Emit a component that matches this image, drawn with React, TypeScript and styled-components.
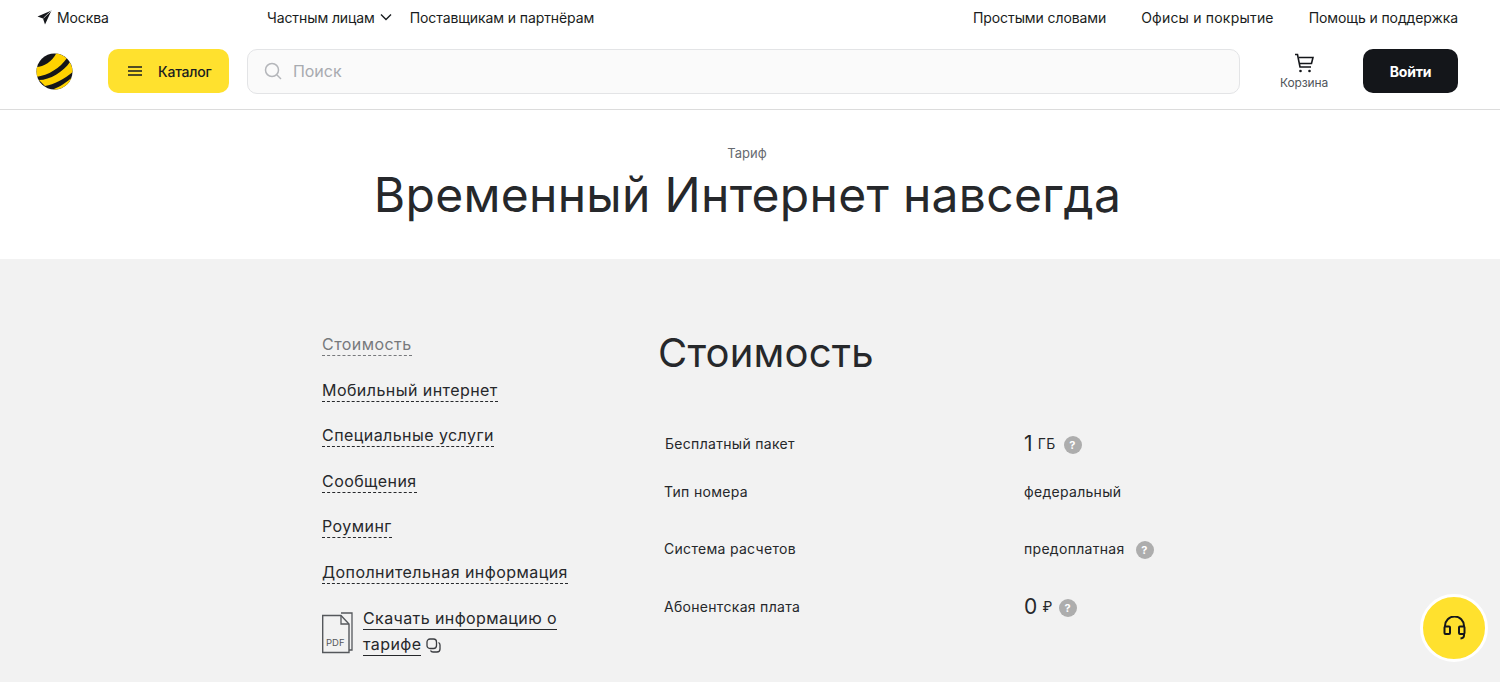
import React from "react";
import styled, { createGlobalStyle } from "styled-components";

const Global = createGlobalStyle`
  html, body { margin: 0; padding: 0; height: 682px; overflow: hidden; background: #fff; }
  body { font-family: Inter, "Noto Sans", "Liberation Sans", sans-serif; color: #191c20; }
  * { box-sizing: border-box; }
`;

const Page = styled.div`
  width: 1500px;
  height: 682px;
  display: flex;
  flex-direction: column;
`;
const TopBar = styled.nav`
  height: 34px;
  padding: 0 42px 0 37px;
  display: flex;
  align-items: center;
  font-size: 14px;
  letter-spacing: -0.1px;
`;
const City = styled.a`
  width: 230px;
  display: flex;
  align-items: center;
  gap: 5px;
`;
const TopLeftLinks = styled.div`
  display: flex;
  align-items: center;
  gap: 18px;
`;
const TopLink = styled.a<{ $wide?: boolean }>`
  display: flex;
  align-items: center;
  gap: 5px;
  white-space: nowrap;
  letter-spacing: ${(p) => (p.$wide ? "0.2px" : "inherit")};
`;
const TopRightLinks = styled.div`
  margin-left: auto;
  display: flex;
  gap: 35px;
`;
const MainBar = styled.header`
  height: 76px;
  padding: 15px 42px 16px 36px;
  border-bottom: 1px solid #dcdcdc;
  display: flex;
  align-items: center;
`;
const LogoWrap = styled.a`
  width: 72px;
  display: flex;
`;
const CatalogButton = styled.button`
  width: 121px;
  height: 44px;
  border: 0;
  border-radius: 10px;
  background: #ffe12e;
  font: 500 14px Inter, sans-serif;
  letter-spacing: -0.2px;
  color: #191c20;
  display: flex;
  align-items: center;
  padding: 0 0 0 20px;
  gap: 16px;
`;
const SearchBox = styled.div`
  width: 994px;
  height: 45px;
  margin-left: 18px;
  border: 1px solid #e3e4e6;
  border-radius: 10px;
  background: #fafafa;
  display: flex;
  align-items: center;
  padding-left: 16px;
  gap: 11px;
  color: #a8abb0;
  font-size: 16px;
`;
const Cart = styled.a`
  width: 123px;
  padding-left: 5px;
  display: flex;
  flex-direction: column;
  align-items: center;
  font-size: 12px;
  letter-spacing: -0.1px;
  color: #50545a;
  gap: 2px;
`;
const LoginButton = styled.button`
  width: 95px;
  height: 44px;
  border: 0;
  border-radius: 10px;
  background: #14161a;
  color: #fff;
  font: 700 14px Inter, sans-serif;
  letter-spacing: -0.2px;
`;
const Hero = styled.section`
  height: 149px;
  display: flex;
  flex-direction: column;
  align-items: center;
  padding-top: 36px;
`;
const Eyebrow = styled.div`
  font-size: 13px;
  line-height: 15px;
  color: #666a70;
  margin-left: -6px;
`;
const Title = styled.h1`
  margin: 5px 0 0 -5px;
  font-size: 48px;
  line-height: 58px;
  font-weight: 400;
  color: #26282b;
  letter-spacing: 0.3px;
`;
const Content = styled.main`
  flex: 1;
  background: #f2f2f2;
  display: flex;
  padding: 72px 0 0 322px;
  overflow: hidden;
`;
const Side = styled.aside`
  width: 336px;
  padding-top: 3px;
  display: flex;
  flex-direction: column;
  align-items: flex-start;
`;
const SideLink = styled.a<{ $muted?: boolean }>`
  font-size: 16px;
  line-height: 21px;
  letter-spacing: 0.44px;
  margin-bottom: 23.6px;
  border-bottom: 1px dashed ${(p) => (p.$muted ? "#77797c" : "#26282b")};
  color: ${(p) => (p.$muted ? "#77797c" : "#26282b")};
`;
const Download = styled.div`
  display: flex;
  gap: 10px;
  width: 240px;
  margin-top: 1px;
`;
const PdfSlot = styled.div`
  flex: none;
  padding-top: 3px;
  display: flex;
`;
const DownloadText = styled.div`
  font-size: 16px;
  line-height: 21px;
  letter-spacing: 0.4px;
  color: #26282b;
  margin-top: -1px;
`;
const DownloadLine = styled.span`
  display: inline-block;
  line-height: 21px;
  border-bottom: 1px solid #26282b;
  margin-bottom: 4px;
`;
const CopyIcon = styled.svg`
  margin-left: 5px;
  vertical-align: -3px;
`;
const Details = styled.section`
  display: flex;
  flex-direction: column;
`;
const SectionTitle = styled.h2`
  margin: 0 0 44px;
  font-size: 40px;
  line-height: 44px;
  font-weight: 400;
  letter-spacing: 0.2px;
  color: #26282b;
`;
const Row = styled.div<{ $h: number }>`
  height: ${(p) => p.$h}px;
  display: flex;
  align-items: center;
  padding-left: 6px;
  font-size: 14px;
  letter-spacing: 0.3px;
  color: #26282b;
`;
const Label = styled.div<{ $inset?: boolean }>`
  width: 360px;
  padding-left: ${(p) => (p.$inset ? 1 : 0)}px;
`;
const Value = styled.div`
  display: flex;
  align-items: center;
`;
const Big = styled.span`
  font-size: 21px;
  margin-right: 5px;
`;
const Help = styled.span<{ $ml: number }>`
  width: 18px;
  height: 18px;
  margin: 4px 0 0 ${(p) => p.$ml}px;
  border-radius: 50%;
  background: #adadad;
  color: #fff;
  font-size: 11px;
  font-weight: 700;
  display: flex;
  align-items: center;
  justify-content: center;
`;
const Support = styled.button`
  position: fixed;
  left: 1420px;
  top: 594px;
  width: 68px;
  height: 68px;
  border-radius: 50%;
  border: 3px solid #fff;
  background: #ffe12e;
  display: flex;
  align-items: center;
  justify-content: center;
  padding: 0;
`;

const Logo = () => (
  <svg width="37" height="37" viewBox="0 0 37 37">
    <defs>
      <clipPath id="ball"><circle cx="18.5" cy="18.5" r="18" /></clipPath>
    </defs>
    <g clipPath="url(#ball)">
      <rect width="37" height="37" fill="#14151a" />
      <path d="M-1 14C8 14 16 9 21-1L31 5C24 15 12 23-1 24Z" fill="#ffd200" />
      <path d="M3 27C14 27 27 19 34 9L38 18C30 25 18 32 9 33Z" fill="#ffd200" />
      <path d="M18 36C24 34 31 29 38 23L38 38 18 38Z" fill="#ffd200" />
    </g>
  </svg>
);

const Plane = () => (
  <svg width="15" height="15" viewBox="0 0 15 15">
    <path d="M14.500.5.500 6.500l5.500 2 2 6Z" fill="#14161a" />
    <path d="M14 1 6.500 8.200" stroke="#fff" strokeWidth=".7" />
  </svg>
);
const Chevron = () => (
  <svg width="12" height="8" viewBox="0 0 12 8" fill="none">
    <path d="m1 1.500 5 5 5-5" stroke="#191c20" strokeWidth="1.400" />
  </svg>
);
const Burger = () => (
  <svg width="14" height="10" viewBox="0 0 14 10">
    <path d="M0 1h14M0 5h14M0 9h14" stroke="#191c20" strokeWidth="1.500" />
  </svg>
);
const Search = () => (
  <svg width="18" height="18" viewBox="0 0 18 18" fill="none">
    <circle cx="8" cy="8" r="6.500" stroke="#b4b6ba" strokeWidth="1.500" />
    <path d="m13 13 4 4" stroke="#b4b6ba" strokeWidth="1.500" />
  </svg>
);
const CartIcon = () => (
  <svg width="20" height="20" viewBox="0 0 20 20" fill="none">
    <path d="M1 1.500h2.500L6 14h11M5 4.500h14l-1.500 6H5.800" stroke="#14161a" strokeWidth="1.600" />
    <circle cx="6.500" cy="18" r="1.300" fill="#14161a" />
    <circle cx="15.500" cy="18" r="1.300" fill="#14161a" />
  </svg>
);
const Pdf = () => (
  <svg width="31" height="42" viewBox="0 0 31 42" fill="none">
    <path d="M19 1h11v37h-3" stroke="#55585c" strokeWidth="1.300" />
    <path d="M.7 3.500H19l8 8.500v28.500H.7Z" fill="#f2f2f2" stroke="#55585c" strokeWidth="1.400" />
    <path d="M19 3.500V12h8" stroke="#55585c" strokeWidth="1.300" />
    <text x="4" y="34" fontSize="9.500" fill="#55585c" fontFamily="Inter, sans-serif">PDF</text>
  </svg>
);
const Copy = () => (
  <CopyIcon width="15" height="15" viewBox="0 0 15 15" fill="none">
    <rect x="1" y="1" width="9.500" height="9.500" rx="3" stroke="#3a3c40" strokeWidth="1.300" />
    <path d="M12.500 4.500c1 .6 1.500 1.500 1.500 2.500v4a3 3 0 0 1-3 3H7c-1 0-2-.5-2.500-1.500" stroke="#3a3c40" strokeWidth="1.300" />
  </CopyIcon>
);
const Headset = () => (
  <svg width="23" height="24" viewBox="0 0 23 24" fill="none">
    <path d="M2 11V10a9.500 9.500 0 0 1 19 0v1" stroke="#14161a" strokeWidth="2" />
    <rect x="1.500" y="10.500" width="5.500" height="7.500" rx="1" stroke="#14161a" strokeWidth="2" />
    <rect x="16" y="10.500" width="5.500" height="7.500" rx="1" stroke="#14161a" strokeWidth="2" />
    <path d="M21 18v1.500c0 1.800-1 2.800-3.500 3" stroke="#14161a" strokeWidth="2" />
  </svg>
);

export default function App() {
  return (
    <Page>
      <Global />
      <TopBar>
        <City><Plane />Москва</City>
        <TopLeftLinks>
          <TopLink>Частным лицам <Chevron /></TopLink>
          <TopLink>Поставщикам и партнёрам</TopLink>
        </TopLeftLinks>
        <TopRightLinks>
          <TopLink>Простыми словами</TopLink>
          <TopLink $wide>Офисы и покрытие</TopLink>
          <TopLink>Помощь и поддержка</TopLink>
        </TopRightLinks>
      </TopBar>
      <MainBar>
        <LogoWrap><Logo /></LogoWrap>
        <CatalogButton><Burger />Каталог</CatalogButton>
        <SearchBox><Search />Поиск</SearchBox>
        <Cart><CartIcon />Корзина</Cart>
        <LoginButton>Войти</LoginButton>
      </MainBar>
      <Hero>
        <Eyebrow>Тариф</Eyebrow>
        <Title>Временный Интернет навсегда</Title>
      </Hero>
      <Content>
        <Side>
          <SideLink $muted>Стоимость</SideLink>
          <SideLink>Мобильный интернет</SideLink>
          <SideLink>Специальные услуги</SideLink>
          <SideLink>Сообщения</SideLink>
          <SideLink>Роуминг</SideLink>
          <SideLink>Дополнительная информация</SideLink>
          <Download>
            <PdfSlot><Pdf /></PdfSlot>
            <DownloadText>
              <DownloadLine>Скачать информацию о</DownloadLine>
              <DownloadLine>тарифе</DownloadLine>
              <Copy />
            </DownloadText>
          </Download>
        </Side>
        <Details>
          <SectionTitle>Стоимость</SectionTitle>
          <Row $h={48}>
            <Label $inset>Бесплатный пакет</Label>
            <Value><Big>1</Big>ГБ<Help $ml={8}>?</Help></Value>
          </Row>
          <Row $h={48}>
            <Label>Тип номера</Label>
            <Value>федеральный</Value>
          </Row>
          <Row $h={66}>
            <Label>Система расчетов</Label>
            <Value>предоплатная<Help $ml={11}>?</Help></Value>
          </Row>
          <Row $h={50}>
            <Label>Абонентская плата</Label>
            <Value><Big>0</Big>₽<Help $ml={6}>?</Help></Value>
          </Row>
        </Details>
      </Content>
      <Support aria-label="Поддержка"><Headset /></Support>
    </Page>
  );
}
